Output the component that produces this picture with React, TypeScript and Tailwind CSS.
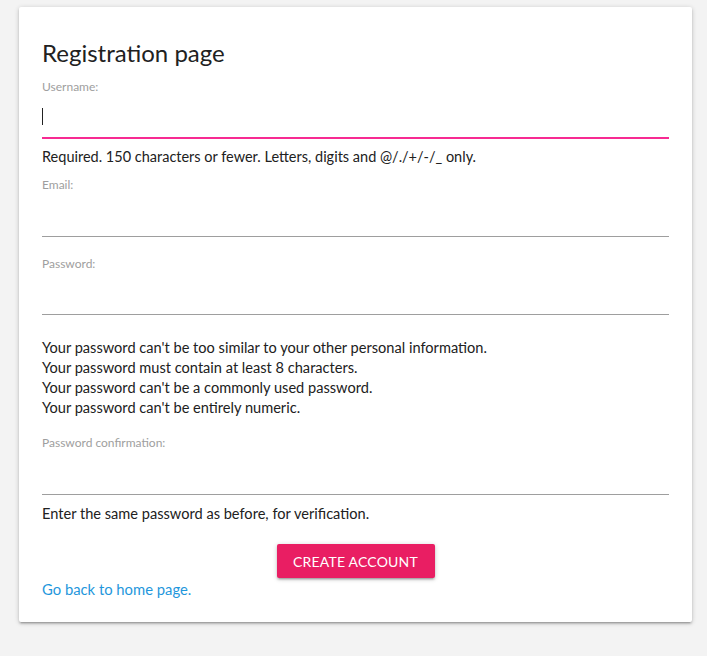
import { FC } from "react";

const Label: FC<{ text: string; className?: string }> = ({ text, className }) => (
  <div className={`text-[12px] leading-[16px] text-[#9e9e9e] ${className ?? ""}`}>{text}</div>
);

const App: FC = () => {
  return (
    <div
      className="min-h-[656px] bg-[#f3f3f3] pt-[7px] pl-[19px] text-[#212121]"
      style={{ fontFamily: "Lato, 'Noto Sans', sans-serif" }}
    >
      <div className="w-[673px] rounded-[2px] bg-white px-[23px] pt-[30px] pb-[23px] shadow-[0_2px_2px_0_rgba(0,0,0,0.14),0_3px_1px_-2px_rgba(0,0,0,0.12),0_1px_5px_0_rgba(0,0,0,0.2)]">
        <h1 className="h-[32px] text-[24px] leading-[32px]">Registration page</h1>

        <Label text="Username:" className="mt-[10px]" />
        <div className="flex h-[44px] items-center border-b-2 border-[#f72a92]">
          <div className="h-[17px] w-px bg-[#222]" />
        </div>
        <p className="mt-[8px] text-[14.5px] leading-[20px]">
          Required. 150 characters or fewer. Letters, digits and @/./+/-/_ only.
        </p>

        <Label text="Email:" className="mt-[10px]" />
        <div className="h-[44px] border-b border-[#9e9e9e]" />

        <Label text="Password:" className="mt-[19px]" />
        <div className="h-[43px] border-b border-[#9e9e9e]" />

        <ul className="mt-[23px] text-[14.6px] leading-[20px]">
          <li>Your password can't be too similar to your other personal information.</li>
          <li>Your password must contain at least 8 characters.</li>
          <li>Your password can't be a commonly used password.</li>
          <li>Your password can't be entirely numeric.</li>
        </ul>

        <Label text="Password confirmation:" className="mt-[17px]" />
        <div className="h-[44px] border-b border-[#9e9e9e]" />
        <p className="mt-[9px] text-[14.6px] leading-[20px]">
          Enter the same password as before, for verification.
        </p>

        <div className="mt-[20px] flex justify-center">
          <button className="h-[34px] w-[158px] rounded-[2px] bg-[#e91e63] text-[14px] tracking-[0.2px] text-white uppercase shadow-[0_2px_2px_0_rgba(0,0,0,0.14),0_3px_1px_-2px_rgba(0,0,0,0.12),0_1px_5px_0_rgba(0,0,0,0.2)]">
            Create account
          </button>
        </div>

        <a href="#" className="mt-px block text-[14.8px] leading-[20px] text-[#1f97dc]">
          Go back to home page.
        </a>
      </div>
    </div>
  );
};

export default App;
